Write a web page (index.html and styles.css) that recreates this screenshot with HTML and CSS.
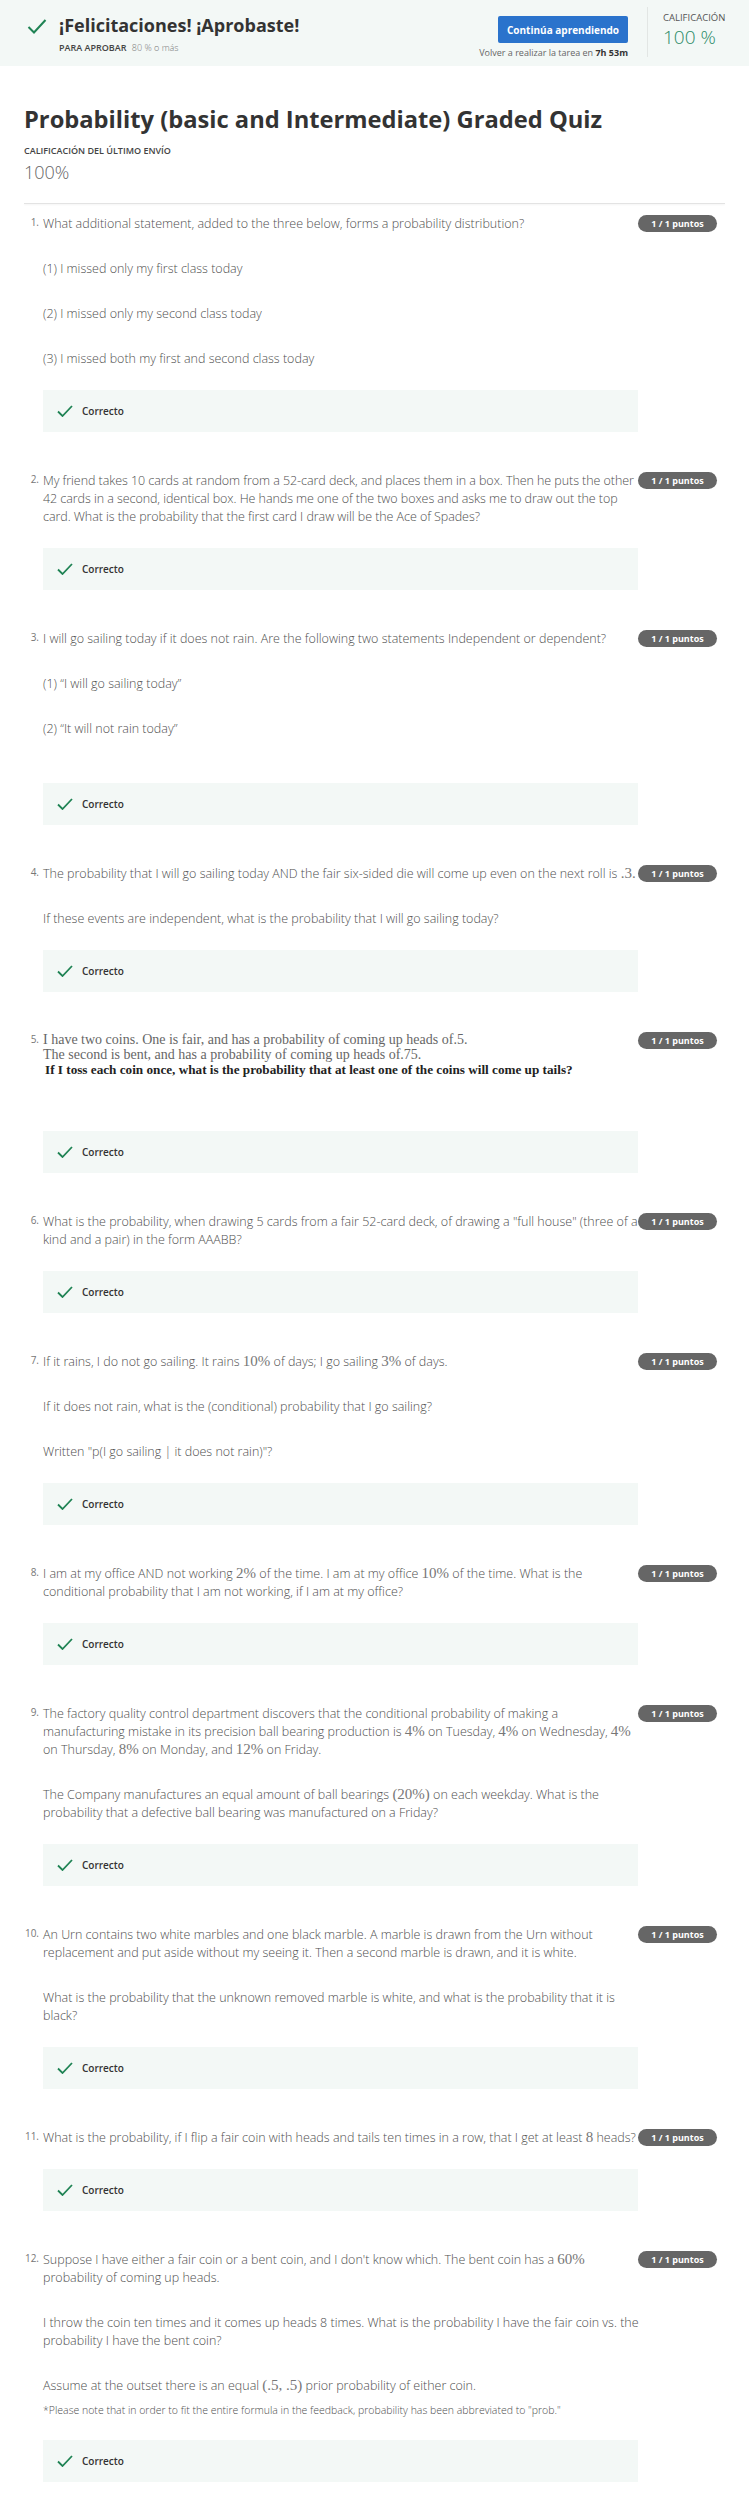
FILE: index.html
```html
<!DOCTYPE html>
<html lang="es">
<head>
<meta charset="utf-8">
<title>Probability (basic and Intermediate) Graded Quiz</title>
<link rel="stylesheet" href="styles.css">
</head>
<body>
<header class="banner">
  <div class="banner-left">
    <svg class="banner-check" viewBox="0 0 20 17"><polyline points="1.5,9 7,14.5 18.5,2" fill="none" stroke="#1f8354" stroke-width="2"/></svg>
    <div>
      <div class="banner-title">¡Felicitaciones! ¡Aprobaste!</div>
      <div class="pass-line"><span class="pass-label">PARA APROBAR</span> <span class="pass-value">80 % o más</span></div>
    </div>
  </div>
  <div class="banner-action">
    <button class="btn">Continúa aprendiendo</button>
    <div class="retake">Volver a realizar la tarea en <b>7h 53m</b></div>
  </div>
  <div class="banner-divider"></div>
  <div class="banner-grade">
    <div class="grade-label">CALIFICACIÓN</div>
    <div class="grade-value">100 %</div>
  </div>
</header>

<main class="page">
  <h1 class="quiz-title">Probability (basic and Intermediate) Graded Quiz</h1>
  <div class="last-label">CALIFICACIÓN DEL ÚLTIMO ENVÍO</div>
  <div class="last-value">100%</div>
  <div class="rule"></div>

  <section class="questions">
    <div class="q">
      <div class="num">1.</div>
      <div class="body">
        <div class="prompt">
          <p>What additional statement, added to the three below, forms a probability distribution?</p>
          <p>(1) I missed only my first class today</p>
          <p>(2) I missed only my second class today</p>
          <p>(3) I missed both my first and second class today</p>
        </div>
        <div class="feedback"><svg class="fb-check" viewBox="0 0 16 12"><polyline points="1,6.5 5.5,11 15,1" fill="none" stroke="#1f8354" stroke-width="1.8"/></svg><span>Correcto</span></div>
      </div>
      <div class="badge">1 / 1 puntos</div>
    </div>

    <div class="q">
      <div class="num">2.</div>
      <div class="body">
        <div class="prompt snug">
          <p>My friend takes 10 cards at random from a 52-card deck, and places them in a box. Then he puts the other 42 cards in a second, identical box. He hands me one of the two boxes and asks me to draw out the top card. What is the probability that the first card I draw will be the Ace of Spades?</p>
        </div>
        <div class="feedback"><svg class="fb-check" viewBox="0 0 16 12"><polyline points="1,6.5 5.5,11 15,1" fill="none" stroke="#1f8354" stroke-width="1.8"/></svg><span>Correcto</span></div>
      </div>
      <div class="badge">1 / 1 puntos</div>
    </div>

    <div class="q">
      <div class="num">3.</div>
      <div class="body">
        <div class="prompt">
          <p>I will go sailing today if it does not rain. Are the following two statements Independent or dependent?</p>
          <p>(1) “I will go sailing today”</p>
          <p>(2) “It will not rain today”</p>
        </div>
        <div class="feedback fb-mid"><svg class="fb-check" viewBox="0 0 16 12"><polyline points="1,6.5 5.5,11 15,1" fill="none" stroke="#1f8354" stroke-width="1.8"/></svg><span>Correcto</span></div>
      </div>
      <div class="badge">1 / 1 puntos</div>
    </div>

    <div class="q">
      <div class="num">4.</div>
      <div class="body">
        <div class="prompt">
          <p>The probability that I will go sailing today AND the fair six-sided die will come up even on the next roll is <span class="m">.3.</span></p>
          <p>If these events are independent, what is the probability that I will go sailing today?</p>
        </div>
        <div class="feedback"><svg class="fb-check" viewBox="0 0 16 12"><polyline points="1,6.5 5.5,11 15,1" fill="none" stroke="#1f8354" stroke-width="1.8"/></svg><span>Correcto</span></div>
      </div>
      <div class="badge">1 / 1 puntos</div>
    </div>

    <div class="q">
      <div class="num">5.</div>
      <div class="body">
        <div class="prompt serif">
          <div>I have two coins. One is fair, and has a probability of coming up heads of.5.</div>
          <div>The second is bent, and has a probability of coming up heads of.75.</div>
          <div class="serif-bold">If I toss each coin once, what is the probability that at least one of the coins will come up tails?</div>
        </div>
        <div class="feedback fb-far"><svg class="fb-check" viewBox="0 0 16 12"><polyline points="1,6.5 5.5,11 15,1" fill="none" stroke="#1f8354" stroke-width="1.8"/></svg><span>Correcto</span></div>
      </div>
      <div class="badge">1 / 1 puntos</div>
    </div>

    <div class="q">
      <div class="num">6.</div>
      <div class="body">
        <div class="prompt">
          <p>What is the probability, when drawing 5 cards from a fair 52-card deck, of drawing a "full house" (three of a kind and a pair) in the form AAABB?</p>
        </div>
        <div class="feedback"><svg class="fb-check" viewBox="0 0 16 12"><polyline points="1,6.5 5.5,11 15,1" fill="none" stroke="#1f8354" stroke-width="1.8"/></svg><span>Correcto</span></div>
      </div>
      <div class="badge">1 / 1 puntos</div>
    </div>

    <div class="q">
      <div class="num">7.</div>
      <div class="body">
        <div class="prompt">
          <p>If it rains, I do not go sailing. It rains <span class="m">10%</span> of days; I go sailing <span class="m">3%</span> of days.</p>
          <p>If it does not rain, what is the (conditional) probability that I go sailing?</p>
          <p>Written "p(I go sailing | it does not rain)"?</p>
        </div>
        <div class="feedback"><svg class="fb-check" viewBox="0 0 16 12"><polyline points="1,6.5 5.5,11 15,1" fill="none" stroke="#1f8354" stroke-width="1.8"/></svg><span>Correcto</span></div>
      </div>
      <div class="badge">1 / 1 puntos</div>
    </div>

    <div class="q">
      <div class="num">8.</div>
      <div class="body">
        <div class="prompt">
          <p>I am at my office AND not working <span class="m">2%</span> of the time. I am at my office <span class="m">10%</span> of the time. What is the conditional probability that I am not working, if I am at my office?</p>
        </div>
        <div class="feedback"><svg class="fb-check" viewBox="0 0 16 12"><polyline points="1,6.5 5.5,11 15,1" fill="none" stroke="#1f8354" stroke-width="1.8"/></svg><span>Correcto</span></div>
      </div>
      <div class="badge">1 / 1 puntos</div>
    </div>

    <div class="q">
      <div class="num">9.</div>
      <div class="body">
        <div class="prompt">
          <p>The factory quality control department discovers that the conditional probability of making a manufacturing mistake in its precision ball bearing production is <span class="m">4%</span> on Tuesday, <span class="m">4%</span> on Wednesday, <span class="m">4%</span> on Thursday, <span class="m">8%</span> on Monday, and <span class="m">12%</span> on Friday.</p>
          <p>The Company manufactures an equal amount of ball bearings <span class="m">(20%)</span> on each weekday. What is the probability that a defective ball bearing was manufactured on a Friday?</p>
        </div>
        <div class="feedback"><svg class="fb-check" viewBox="0 0 16 12"><polyline points="1,6.5 5.5,11 15,1" fill="none" stroke="#1f8354" stroke-width="1.8"/></svg><span>Correcto</span></div>
      </div>
      <div class="badge">1 / 1 puntos</div>
    </div>

    <div class="q">
      <div class="num">10.</div>
      <div class="body">
        <div class="prompt">
          <p>An Urn contains two white marbles and one black marble. A marble is drawn from the Urn without replacement and put aside without my seeing it. Then a second marble is drawn, and it is white.</p>
          <p>What is the probability that the unknown removed marble is white, and what is the probability that it is black?</p>
        </div>
        <div class="feedback"><svg class="fb-check" viewBox="0 0 16 12"><polyline points="1,6.5 5.5,11 15,1" fill="none" stroke="#1f8354" stroke-width="1.8"/></svg><span>Correcto</span></div>
      </div>
      <div class="badge">1 / 1 puntos</div>
    </div>

    <div class="q">
      <div class="num">11.</div>
      <div class="body">
        <div class="prompt">
          <p>What is the probability, if I flip a fair coin with heads and tails ten times in a row, that I get at least <span class="m">8</span> heads?</p>
        </div>
        <div class="feedback"><svg class="fb-check" viewBox="0 0 16 12"><polyline points="1,6.5 5.5,11 15,1" fill="none" stroke="#1f8354" stroke-width="1.8"/></svg><span>Correcto</span></div>
      </div>
      <div class="badge">1 / 1 puntos</div>
    </div>

    <div class="q">
      <div class="num">12.</div>
      <div class="body">
        <div class="prompt">
          <p>Suppose I have either a fair coin or a bent coin, and I don't know which. The bent coin has a <span class="m">60%</span> probability of coming up heads.</p>
          <p>I throw the coin ten times and it comes up heads 8 times. What is the probability I have the fair coin vs. the probability I have the bent coin?</p>
          <p class="tight">Assume at the outset there is an equal <span class="m">(.5, .5)</span> prior probability of either coin.</p>
          <p class="note">*Please note that in order to fit the entire formula in the feedback, probability has been abbreviated to "prob."</p>
        </div>
        <div class="feedback"><svg class="fb-check" viewBox="0 0 16 12"><polyline points="1,6.5 5.5,11 15,1" fill="none" stroke="#1f8354" stroke-width="1.8"/></svg><span>Correcto</span></div>
      </div>
      <div class="badge">1 / 1 puntos</div>
    </div>
  </section>
</main>
</body>
</html>
```

FILE: styles.css
```css
* { box-sizing: border-box; }

body {
  margin: 0;
  font-family: "Open Sans", "Liberation Sans", sans-serif;
  color: #555;
  background: #fff;
}

/* ---------- banner ---------- */
.banner {
  display: flex;
  height: 66px;
  background: #f3f8f6;
}

.banner-left {
  flex: 1;
  display: flex;
  padding: 18px 0 0 27px;
}

.banner-check {
  width: 20px;
  height: 17px;
  margin-right: 12px;
  flex: none;
}

.banner-title {
  margin-top: -4px;
  font-size: 18px;
  line-height: 23px;
  font-weight: 700;
  color: #333;
}

.pass-line {
  margin-top: 5px;
  font-size: 9px;
  line-height: 12px;
}

.pass-label {
  font-weight: 600;
  color: #444;
  margin-right: 3px;
}

.pass-value {
  color: #777;
  font-weight: 300;
}

.banner-action {
  display: flex;
  flex-direction: column;
  align-items: flex-end;
  width: 130px;
  padding-top: 16px;
}

.btn {
  width: 130px;
  height: 27px;
  border: 0;
  border-radius: 2px;
  background: #2a73cc;
  color: #fff;
  font-family: "Open Sans", sans-serif;
  font-size: 10px;
  font-weight: 700;
  padding: 0;
}

.retake {
  margin-top: 4px;
  font-size: 9px;
  line-height: 12px;
  color: #666;
  white-space: nowrap;
}

.retake b {
  color: #333;
  font-weight: 700;
}

.banner-divider {
  width: 1px;
  height: 50px;
  margin: 7px 15px 0 19px;
  background: #e2e6e4;
}

.banner-grade {
  width: 86px;
  padding-top: 12px;
}

.grade-label {
  font-size: 9.5px;
  line-height: 12px;
  color: #555;
}

.grade-value {
  margin-top: 2px;
  font-size: 19px;
  line-height: 22px;
  font-weight: 300;
  color: #2a8a66;
}

/* ---------- title area ---------- */
.page {
  padding: 0 24px;
}

.quiz-title {
  margin: 37px 0 0;
  font-size: 23.7px;
  line-height: 32px;
  font-weight: 700;
  color: #333;
}

.last-label {
  margin-top: 10px;
  font-size: 9px;
  line-height: 12px;
  font-weight: 600;
  color: #444;
}

.last-value {
  margin-top: 4px;
  font-size: 18px;
  line-height: 22px;
  font-weight: 300;
  color: #666;
}

.rule {
  margin-top: 20px;
  width: 701px;
  height: 1px;
  background: #e3e3e3;
  box-shadow: 0 1px 2px rgba(0, 0, 0, 0.06);
}

/* ---------- questions ---------- */
.questions {
  padding-top: 11px;
}

.q {
  display: grid;
  grid-template-columns: 19px 595px 79px;
  align-items: start;
  margin-bottom: 40px;
}

.num {
  padding-right: 4px;
  text-align: right;
  font-size: 10px;
  line-height: 14px;
  color: #777;
  white-space: nowrap;
}

.prompt {
  margin-right: -2px;
  font-size: 12.5px;
  line-height: 18px;
  font-weight: 300;
  color: #4f4f4f;
}

.prompt.snug {
  letter-spacing: -0.06px;
}

.prompt p {
  margin: 0 0 27px;
}

.prompt p:last-child {
  margin-bottom: 0;
}

.prompt p.tight {
  margin-bottom: 7px;
}

.prompt p.note {
  font-size: 10.5px;
  line-height: 16px;
}

.m {
  font-family: "Liberation Serif", "DejaVu Serif", serif;
  font-size: 15px;
  line-height: 1;
  font-weight: 400;
  color: #777;
}

.serif {
  font-family: "Liberation Serif", "DejaVu Serif", serif;
  font-size: 14px;
  line-height: 15px;
  font-weight: 400;
  color: #666;
}

.serif-bold {
  padding-left: 2px;
  font-size: 13.2px;
  font-weight: 700;
  color: #222;
}

.feedback {
  display: flex;
  align-items: center;
  width: 595px;
  height: 42px;
  margin-top: 22px;
  padding-left: 14px;
  background: #f3f8f6;
  font-size: 10px;
  font-weight: 600;
  color: #333;
}

.feedback.fb-mid {
  margin-top: 45px;
}

.feedback.fb-far {
  margin-top: 54px;
}

.fb-check {
  width: 16px;
  height: 12px;
  margin-right: 9px;
}

.badge {
  position: relative;
  height: 17px;
  border-radius: 9px;
  background: #666;
  color: #fff;
  font-size: 9px;
  line-height: 17px;
  font-weight: 700;
  text-align: center;
  white-space: nowrap;
}
```
